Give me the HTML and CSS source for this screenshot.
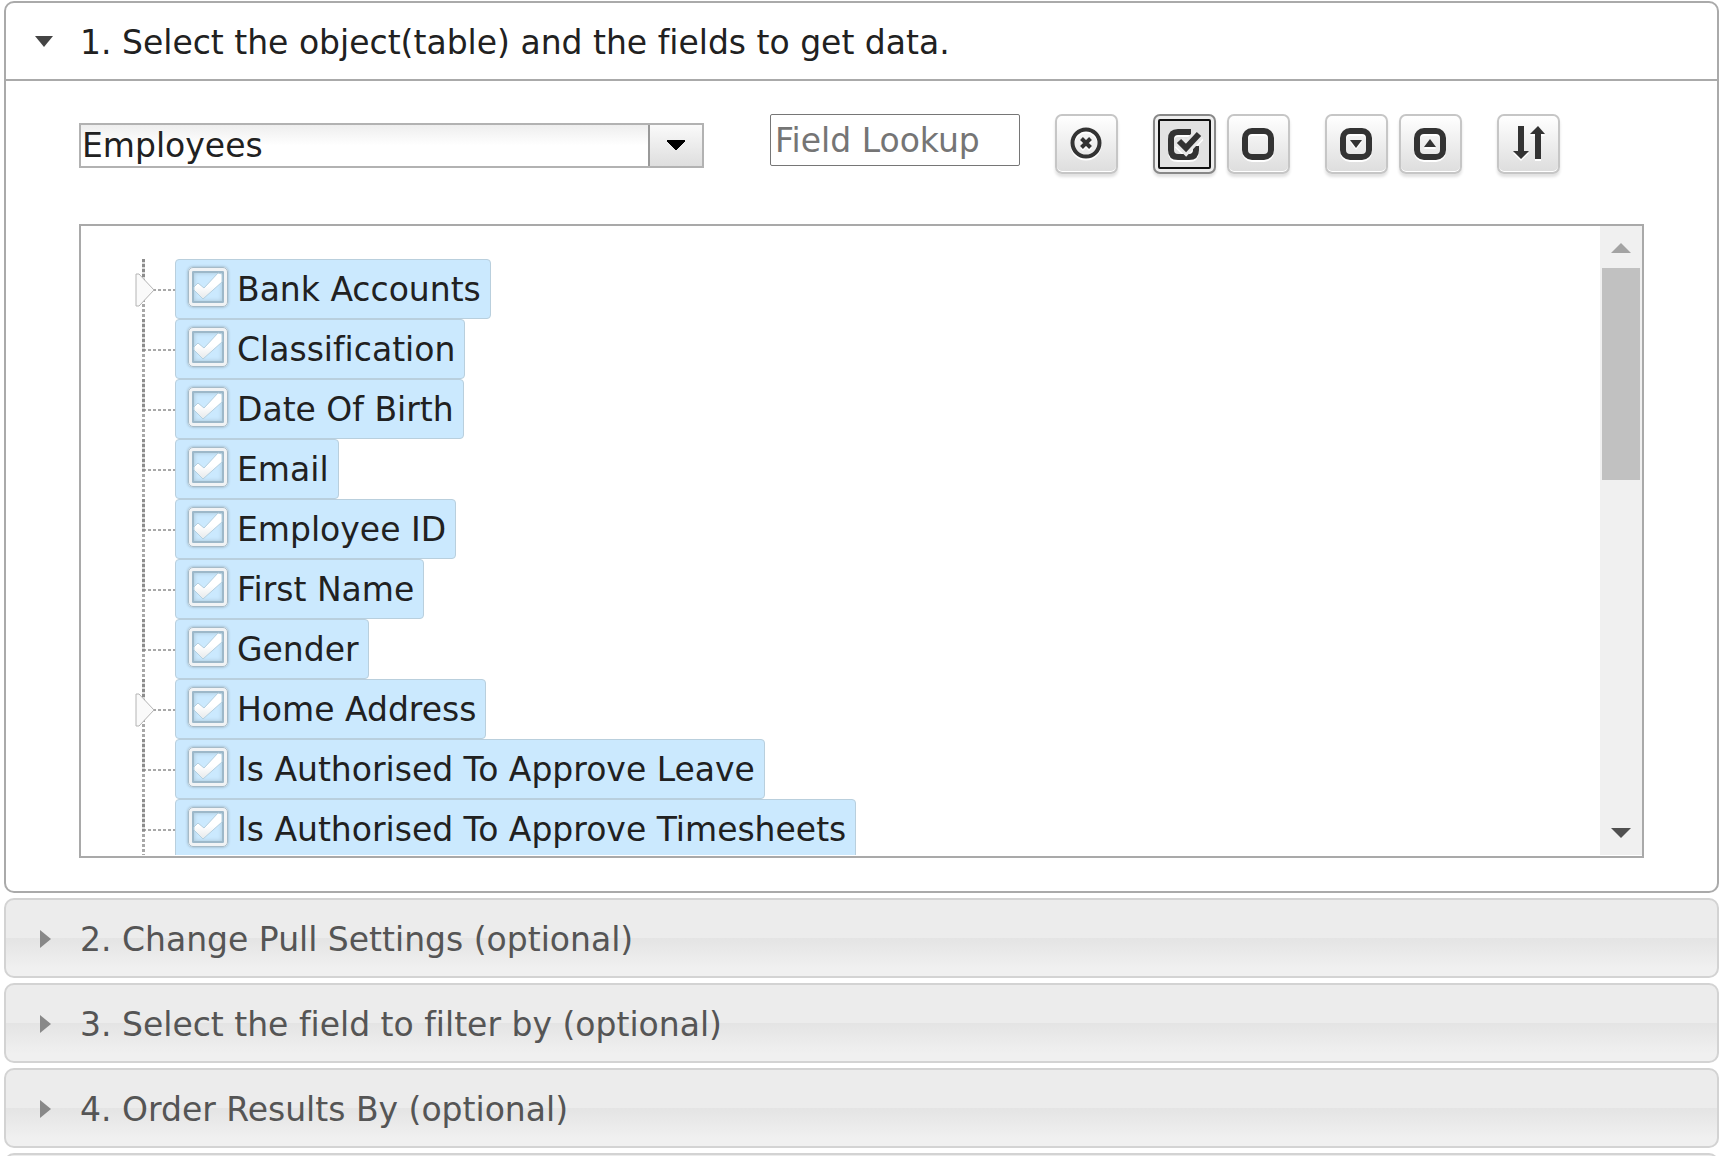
FILE: index.html
```html
<!DOCTYPE html>
<html lang="en">
<head>
    <meta charset="UTF-8">
    <title>Get Data</title>
    <link rel="stylesheet" href="styles.css">
</head>
<body>
<svg class="defs">
    <defs>
        <linearGradient id="tickFill" x1="0" y1="0" x2="0" y2="1">
            <stop offset="0.5" stop-color="#fff"/>
            <stop offset="1" stop-color="#e6e9eb"/>
        </linearGradient>
        <symbol id="tick" viewBox="0 0 40 40">
            <path d="M6 20l4-4 6 5L30 6l4 1 0 8-19 17L6 23z" fill="url(#tickFill)" stroke="#b4cfdf" stroke-width="1"/>
        </symbol>
        <symbol id="expander" viewBox="0 0 20 34">
            <path d="M1 1l3 0 15 16L4 33H1z" fill="#fafafa" stroke="#b4b4b4" stroke-width="1"/>
        </symbol>
    </defs>
</svg>

<div class="accordion">
    <h3 class="header active">
        <button type="button"><span class="arrow down"></span>1. Select the object(table) and the fields to get data.</button>
    </h3>
    <div class="content">
        <div class="tools">
            <select class="object" aria-label="Object">
                <option>Employees</option>
            </select>
            <input class="lookup" type="text" placeholder="Field Lookup" aria-label="Field Lookup">
            <div class="group">
                <button type="button" class="btn" title="Clear">
                    <svg viewBox="0 0 32 36"><circle class="line thin" cx="15" cy="16" r="13.5"/><path class="line thin" d="M10.5 11.5l9 9M19.5 11.5l-9 9"/></svg>
                </button>
            </div>
            <div class="group">
                <button type="button" class="btn focused" title="Check all">
                    <svg viewBox="0 0 32 36"><g class="line"><path d="M22 5H9q-7 0-7 7v11q0 7 7 7h11q7 0 7-7v-4"/><path class="halo" d="M10 14l7 7L30 7"/><path d="M10 14l7 7L30 7"/></g></svg>
                </button>
                <button type="button" class="btn" title="Uncheck all">
                    <svg viewBox="0 0 32 36"><rect class="line" x="2" y="4" width="26" height="26" rx="7"/></svg>
                </button>
            </div>
            <div class="group">
                <button type="button" class="btn" title="Expand all">
                    <svg viewBox="0 0 32 36"><rect class="line" x="2" y="4" width="26" height="26" rx="7"/><path class="solid" d="M9 13h12l-6 8z"/></svg>
                </button>
                <button type="button" class="btn" title="Collapse all">
                    <svg viewBox="0 0 32 36"><rect class="line" x="2" y="4" width="26" height="26" rx="7"/><path class="solid" d="M9 20h12l-6-8z"/></svg>
                </button>
            </div>
            <div class="group">
                <button type="button" class="btn" title="Sort">
                    <svg viewBox="0 0 32 36"><path class="solid" d="M5 -1h6v25h5L8 32 0 24h5zM22 32h6V7h4L25 -1 17 7h5z"/></svg>
                </button>
            </div>
        </div>

        <div class="fields">
            <ul class="tree">
                <li><svg class="expander"><use href="#expander"/></svg><label><span class="check"><input type="checkbox" checked><svg><use href="#tick"/></svg></span>Bank Accounts</label></li>
                <li><label><span class="check"><input type="checkbox" checked><svg><use href="#tick"/></svg></span>Classification</label></li>
                <li><label><span class="check"><input type="checkbox" checked><svg><use href="#tick"/></svg></span>Date Of Birth</label></li>
                <li><label><span class="check"><input type="checkbox" checked><svg><use href="#tick"/></svg></span>Email</label></li>
                <li><label><span class="check"><input type="checkbox" checked><svg><use href="#tick"/></svg></span>Employee ID</label></li>
                <li><label><span class="check"><input type="checkbox" checked><svg><use href="#tick"/></svg></span>First Name</label></li>
                <li><label><span class="check"><input type="checkbox" checked><svg><use href="#tick"/></svg></span>Gender</label></li>
                <li><svg class="expander"><use href="#expander"/></svg><label><span class="check"><input type="checkbox" checked><svg><use href="#tick"/></svg></span>Home Address</label></li>
                <li><label><span class="check"><input type="checkbox" checked><svg><use href="#tick"/></svg></span>Is Authorised To Approve Leave</label></li>
                <li><label><span class="check"><input type="checkbox" checked><svg><use href="#tick"/></svg></span>Is Authorised To Approve Timesheets</label></li>
            </ul>
            <div class="scrollbar">
                <span class="up"></span>
                <div class="thumb"></div>
                <span class="down"></span>
            </div>
        </div>
    </div>

    <h3 class="header">
        <button type="button"><span class="arrow"></span>2. Change Pull Settings (optional)</button>
    </h3>
    <h3 class="header">
        <button type="button"><span class="arrow"></span>3. Select the field to filter by (optional)</button>
    </h3>
    <h3 class="header">
        <button type="button"><span class="arrow"></span>4. Order Results By (optional)</button>
    </h3>
    <h3 class="header">
        <button type="button" aria-label="More"></button>
    </h3>
</div>
</body>
</html>
```

FILE: styles.css
```css
*{
    box-sizing: border-box;
    margin: 0;
    padding: 0;
}
body{
    height: 100vh;
    overflow: hidden;
    background: #fff;
    color: #212121;
    font-family: Verdana, "DejaVu Sans", sans-serif;
    font-size: 33px;
    font-variant-ligatures: none;
}
button, input, select{
    font: inherit;
    font-variant-ligatures: none;
    color: inherit;
}
.defs{
    position: absolute;
    width: 0;
    height: 0;
}
.accordion{
    padding: 1px 5px 0 4px;
}

/* headers */
.header{
    margin-bottom: 5px;
    font-size: 33px;
    font-weight: normal;
}
.header button{
    display: flex;
    align-items: center;
    width: 100%;
    height: 80px;
    padding: 2px 0 0 29px;
    border: 2px solid #d3d3d3;
    border-radius: 10px;
    background: linear-gradient(#ececec 50%, #e4e4e4 50%, #f0f0f0 90%);
    color: #555;
    text-align: left;
}
.header.active{
    margin-bottom: 0;
}
.header.active button{
    border-color: #aaa;
    border-radius: 10px 10px 0 0;
    background: #fff;
    color: #212121;
}
.arrow{
    width: 45px;
    height: 18px;
    background: #888;
    clip-path: polygon(5px 0, 16px 9px, 5px 18px);
}
.arrow.down{
    background: #444;
    clip-path: polygon(0 3px, 18px 3px, 9px 14px);
}

.content{
    margin-bottom: 5px;
    padding: 33px 73px;
    border: 2px solid #aaa;
    border-top: 0;
    border-radius: 0 0 10px 10px;
}

/* toolbar */
.tools{
    display: flex;
    align-items: center;
    gap: 35px;
    margin-bottom: 50px;
}
.object{
    flex: 0 1 625px;
    min-width: 0;
    height: 45px;
    margin: 2px 31px 0 0;
    padding-left: 1px;
    appearance: none;
    border: 2px solid #b2b2b2;
    border-radius: 0;
    background:
        conic-gradient(from -48deg at 50% 100%, #000 96deg, transparent 0) right 17px center / 18px 10px no-repeat,
        linear-gradient(#999, #999) right 52px top / 2px 100% no-repeat,
        linear-gradient(#fafafa, #dedede) right / 52px 100% no-repeat,
        linear-gradient(#eee, #fff 50%);
}
.lookup{
    align-self: flex-start;
    flex: 0 1 250px;
    min-width: 0;
    height: 52px;
    padding: 1px 4px 0;
    border: 1px solid #767676;
    border-radius: 2px;
}
.lookup::placeholder{
    color: #757575;
}
.group{
    display: flex;
    gap: 11px;
}
.btn{
    display: flex;
    align-items: center;
    justify-content: center;
    width: 63px;
    height: 60px;
    padding-top: 2px;
    border: 2px solid #c6c6c6;
    border-radius: 7px;
    background: linear-gradient(#fff, #ddd);
    box-shadow: 0 3px 3px rgba(0, 0, 0, .12), inset 0 -1px 0 #fff;
}
.btn svg{
    width: 32px;
    height: 36px;
    overflow: visible;
    filter: drop-shadow(0 2px 0 #fff);
}
.btn.focused{
    border-color: #888;
    background: #e2e2e2;
    box-shadow: 0 3px 3px rgba(0, 0, 0, .12), inset 0 0 0 3px #eee;
    outline: 2px solid #111;
    outline-offset: -7px;
}
.line{
    fill: none;
    stroke: #333;
    stroke-width: 6;
}
.thin{
    stroke-width: 4;
}
.halo{
    stroke: #e8e8e8;
    stroke-width: 12;
}
.solid{
    fill: #333;
}

/* field tree */
.fields{
    display: flex;
    height: 634px;
    padding-bottom: 1px;
    border: 2px solid #a9a9a9;
}
.tree{
    flex: 1;
    padding: 33px 0 0 61px;
    overflow: hidden;
    list-style: none;
}
.tree li{
    position: relative;
    display: flex;
    height: 60px;
    padding-left: 33px;
    background:
        repeating-linear-gradient(#8c8c8c 0 3px, #ddd 3px 5px) 0 0 / 3px 32px no-repeat,
        repeating-linear-gradient(#a8a8a8 0 3px, transparent 3px 5px) 0 30px / 3px 30px no-repeat,
        repeating-linear-gradient(90deg, #a8a8a8 0 3px, transparent 3px 5px) 1px 30px / 32px 2px no-repeat;
}
.tree label{
    display: flex;
    align-items: center;
    padding: 1px 9px 0 12px;
    border: 1px solid #b9cfdd;
    border-radius: 4px;
    background: #cbe9fe;
    white-space: nowrap;
}
.expander{
    position: absolute;
    left: -7px;
    top: 14px;
    width: 20px;
    height: 34px;
}
.check{
    display: grid;
    width: 40px;
    height: 40px;
    margin: 0 9px 5px 0;
}
.check input,
.check svg{
    grid-area: 1 / 1;
    width: 40px;
    height: 40px;
}
.check input{
    appearance: none;
    border: 4px solid #f1f3f5;
    border-radius: 5px;
    outline: 1px solid #a6bbc8;
    outline-offset: -1px;
    box-shadow: inset 0 0 0 2px #9db8c9, inset 0 0 4px 2px #a9c4d5, 0 0 3px #8ba3b3;
}
.check svg{
    pointer-events: none;
}

.scrollbar{
    display: flex;
    flex-direction: column;
    align-items: center;
    width: 42px;
    background: #f0f0f0;
}
.scrollbar .up,
.scrollbar .down{
    width: 20px;
    height: 10px;
    background: #a3a3a3;
    clip-path: polygon(50% 0, 100% 100%, 0 100%);
}
.scrollbar .up{
    margin: 17px 0 15px;
}
.scrollbar .down{
    margin: auto 0 17px;
    background: #505050;
    clip-path: polygon(0 0, 100% 0, 50% 100%);
}
.thumb{
    width: 38px;
    height: 212px;
    background: #c1c1c1;
}
```
